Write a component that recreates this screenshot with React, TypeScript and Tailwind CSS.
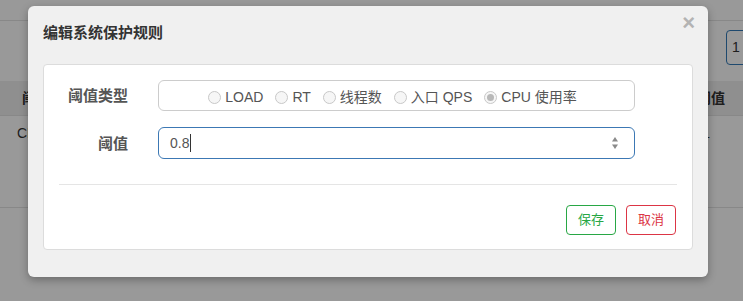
import React from "react";

const FONT = '"Liberation Sans", Arial, "Noto Sans CJK SC", sans-serif';

function Radio({ label, checked }: { label: string; checked?: boolean }) {
  return (
    <span className="flex items-center">
      <span className="flex h-[13px] w-[13px] items-center justify-center rounded-full border border-[#c8c8c8] bg-[#f6f6f6]">
        {checked && <span className="h-[7px] w-[7px] rounded-full bg-[#b8b8b8]" />}
      </span>
      <span className="ml-[4px]">{label}</span>
    </span>
  );
}

export default function App() {
  return (
    <div className="relative h-[301px] w-full overflow-hidden bg-white text-[#333]" style={{ fontFamily: FONT }}>
      {/* underlying page */}
      <div className="h-[21px] border-b border-[#e3e3e3]" />
      <div className="flex h-[60px] justify-end pt-[9px]">
        <div className="mr-[-30px] flex h-[35px] w-[47px] items-center rounded-[4px] border border-[#337ab7] pl-[5px] text-[14px]">1</div>
      </div>
      <div className="flex h-[35px] items-center justify-between border-b border-[#e3e3e3] bg-[#eeeeee] text-[14px] font-bold">
        <span className="pl-[22px]">阈值</span>
        <span className="pr-[18px]">阈值</span>
      </div>
      <div className="flex h-[92px] items-start justify-between border-b border-[#e3e3e3] pt-[7px] text-[14px]">
        <span className="pl-[17px]">CPU</span>
        <span className="pr-[33px]">1</span>
      </div>

      {/* overlay */}
      <div className="absolute inset-0 bg-black/40" />

      {/* modal */}
      <div className="absolute left-[28px] top-[6px] flex h-[271px] w-[680px] flex-col rounded-[6px] bg-[#f0f0f0] px-[15px] shadow-[0_3px_9px_rgba(0,0,0,0.3)]">
        <div className="relative flex h-[58px] items-center pb-[4px]">
          <span className="text-[15px] font-bold text-[#333]">编辑系统保护规则</span>
          <span className="absolute right-[-2px] top-[6px] text-[22px] font-bold leading-none text-[#b3b3b3]">×</span>
        </div>
        <div className="flex h-[186px] flex-col rounded-[4px] border border-[#dcdcdc] bg-white px-[15px] pt-[15px]">
          <div className="flex items-center">
            <span className="w-[69px] pt-[2px] text-right text-[15px] font-bold text-[#555]">阈值类型</span>
            <div className="ml-[30px] flex h-[31px] w-[477px] items-center justify-center gap-[12px] rounded-[6px] border border-[#cccccc] pr-[8px] pt-[4px] text-[14px] text-[#555]">
              <Radio label="LOAD" />
              <Radio label="RT" />
              <Radio label="线程数" />
              <Radio label="入口 QPS" />
              <Radio label="CPU 使用率" checked />
            </div>
          </div>
          <div className="mt-[16px] flex items-center">
            <span className="w-[69px] pt-[2px] text-right text-[15px] font-bold text-[#555]">阈值</span>
            <div className="ml-[30px] flex h-[32px] w-[477px] items-center justify-between rounded-[6px] border border-[#3c78b4] pl-[11px] pr-[15px] text-[14px] text-[#555]">
              <span className="flex items-center">
                0.8<span className="ml-[1px] h-[18px] w-px bg-[#333]" />
              </span>
              <svg width="8" height="14" viewBox="0 0 8 14">
                <path d="M4 1 L7 5.5 L1 5.5 Z" fill="#8a8a8a" />
                <path d="M4 13 L7 8.5 L1 8.5 Z" fill="#8a8a8a" />
              </svg>
            </div>
          </div>
          <div className="mt-[25px] h-px bg-[#e5e5e5]" />
          <div className="mt-[20px] flex justify-end gap-[10px] pr-[1px]">
            <button className="h-[30px] w-[50px] rounded-[4px] border border-[#28a745] bg-white text-[13px] text-[#28a745]">保存</button>
            <button className="h-[30px] w-[50px] rounded-[4px] border border-[#dc3545] bg-white text-[13px] text-[#dc3545]">取消</button>
          </div>
        </div>
      </div>
    </div>
  );
}
